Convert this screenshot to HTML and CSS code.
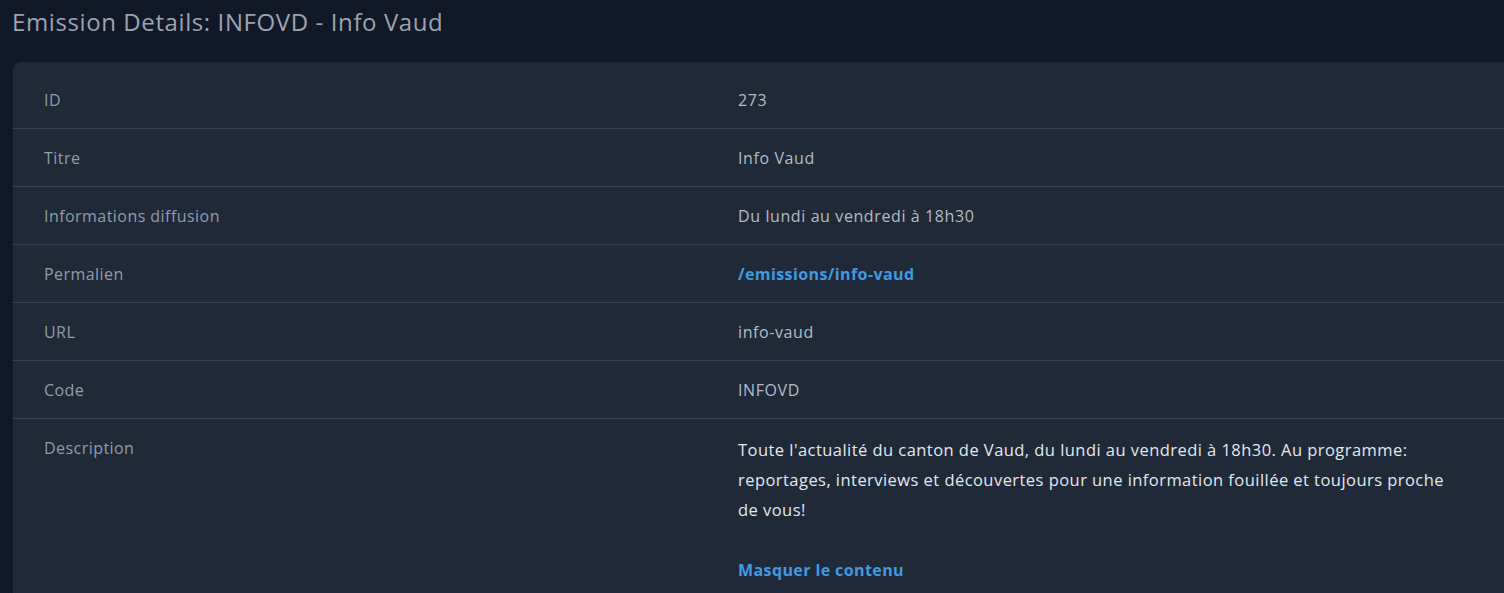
FILE: index.html
```html
<!DOCTYPE html>
<html lang="fr">
<head>
<meta charset="utf-8">
<title>Emission Details</title>
<link rel="stylesheet" href="styles.css">
</head>
<body>
<h1 class="page-title">Emission Details: INFOVD - Info Vaud</h1>
<div class="card">
  <div class="row"><div class="label">ID</div><div class="value">273</div></div>
  <div class="row"><div class="label">Titre</div><div class="value">Info Vaud</div></div>
  <div class="row"><div class="label">Informations diffusion</div><div class="value">Du lundi au vendredi à 18h30</div></div>
  <div class="row"><div class="label">Permalien</div><div class="value"><a class="link" href="#">/emissions/info-vaud</a></div></div>
  <div class="row"><div class="label">URL</div><div class="value">info-vaud</div></div>
  <div class="row"><div class="label">Code</div><div class="value">INFOVD</div></div>
  <div class="row last"><div class="label">Description</div><div class="value">
    <p class="desc">Toute l'actualité du canton de Vaud, du lundi au vendredi à 18h30. Au programme: reportages, interviews et découvertes pour une information fouillée et toujours proche de vous!</p>
    <a class="link" href="#">Masquer le contenu</a>
  </div></div>
</div>
</body>
</html>
```
FILE: styles.css
```css
html, body {
  margin: 0;
  padding: 0;
  background: #111827;
  overflow: hidden;
  font-family: "Open Sans", sans-serif;
}
.page-title {
  margin: 0;
  padding: 6px 12px 0;
  height: 32px;
  line-height: 32px;
  font-size: 24px;
  font-weight: 400;
  letter-spacing: 0.6px;
  color: #9ca3af;
  margin-bottom: 24px;
}
.card {
  margin-left: 13px;
  width: 1600px;
  min-height: 600px;
  background: #1f2937;
  border-radius: 8px 0 0 0;
  padding-top: 9px;
}
.row {
  display: grid;
  grid-template-columns: 725px 1fr;
  border-bottom: 1px solid #374151;
}
.row.last { border-bottom: none; }
.label, .value {
  padding: 17px 0 16px;
  font-size: 16px;
  line-height: 24px;
  letter-spacing: 0.45px;
}
.label {
  padding-left: 31px;
  color: #919cad;
}
.value {
  color: #b4bcc8;
  letter-spacing: 0.6px;
}
.desc {
  margin: -1px 0 33px;
  max-width: 715px;
  font-size: 16.5px;
  letter-spacing: 0.45px;
  line-height: 30px;
  color: #e2e8f0;
}
.link {
  color: #4299e1;
  font-weight: 700;
  text-decoration: none;
  letter-spacing: 0.4px;
}
```
